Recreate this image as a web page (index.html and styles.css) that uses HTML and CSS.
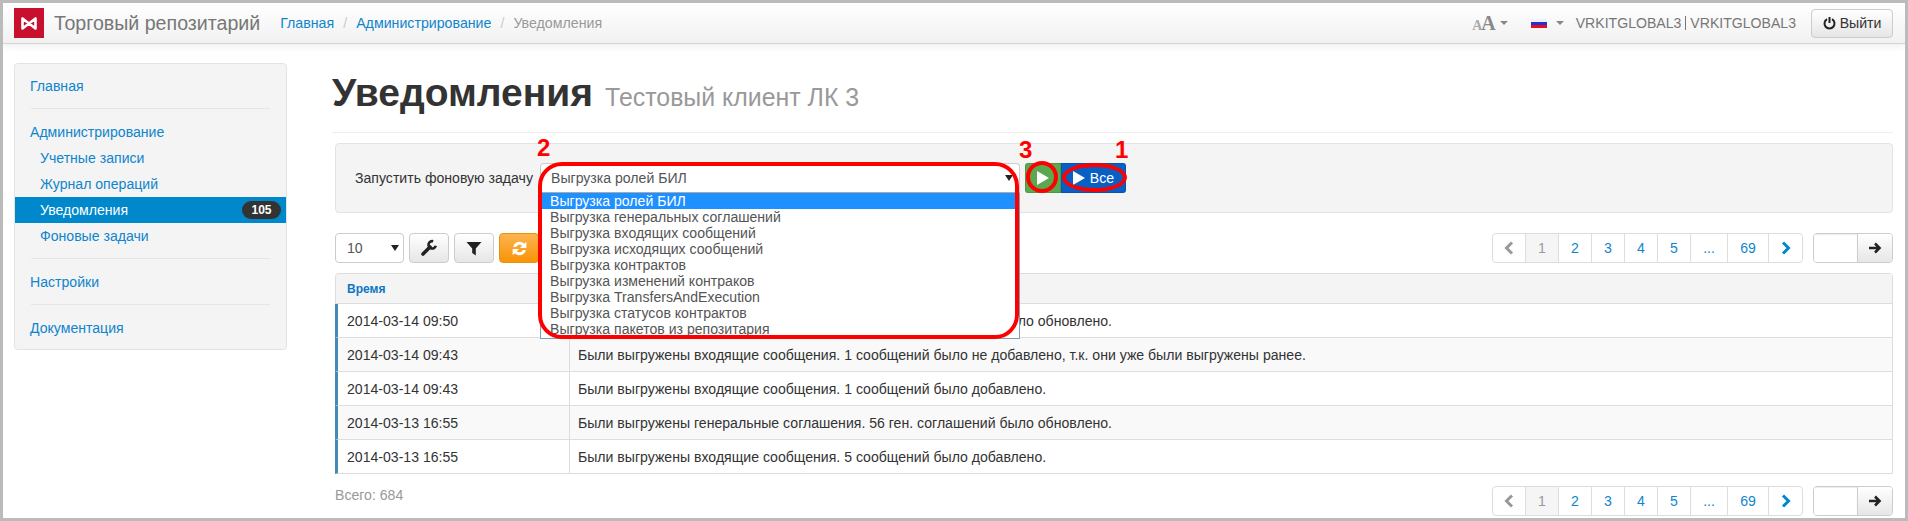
FILE: index.html
```html
<!DOCTYPE html>
<html lang="ru">
<head>
<meta charset="utf-8">
<title>Уведомления</title>
<link rel="stylesheet" href="styles.css">
</head>
<body>
<div class="frame">
  <header class="navbar">
    <div class="logo"><svg width="30" height="30" viewBox="0 0 30 30"><path d="M8.5 10.5V20.5L21.5 10.5V20.5L8.5 10.5Z" fill="none" stroke="#fff" stroke-width="2.6" stroke-linejoin="round"/></svg></div>
    <div class="brand">Торговый репозитарий</div>
    <nav class="crumbs"><a>Главная</a><span class="sep">/</span><a>Администрирование</a><span class="sep">/</span><span class="cur">Уведомления</span></nav>
    <div class="nav-right">
      <div class="aa"><span class="a1">A</span><span class="a2">A</span></div><i class="caret"></i>
      <svg class="flag" width="16" height="9" viewBox="0 0 16 9"><rect width="16" height="3" fill="#eef"/><rect y="3" width="16" height="3" fill="#2233cc"/><rect y="6" width="16" height="3" fill="#e01020"/></svg><i class="caret caret-flag"></i>
      <span class="user">VRKITGLOBAL3</span><span class="user-sep"></span><span class="user">VRKITGLOBAL3</span>
      <button class="logout"><svg width="13" height="14" viewBox="0 0 13 14"><path d="M4 3.2A5 5 0 1 0 9 3.2" fill="none" stroke="#222" stroke-width="2"/><path d="M6.5 1V7" stroke="#222" stroke-width="2"/></svg>Выйти</button>
    </div>
  </header>
  <div class="layout">
    <aside class="sidebar">
      <a class="item">Главная</a>
      <div class="divider"></div>
      <a class="item">Администрирование</a>
      <a class="item sub">Учетные записи</a>
      <a class="item sub">Журнал операций</a>
      <a class="item sub active">Уведомления<span class="badge">105</span></a>
      <a class="item sub">Фоновые задачи</a>
      <div class="divider"></div>
      <a class="item">Настройки</a>
      <div class="divider"></div>
      <a class="item">Документация</a>
    </aside>
    <main class="main">
      <div class="page-header"><h1>Уведомления</h1><small>Тестовый клиент ЛК 3</small></div>
      <div class="content">
        <div class="well">
          <span class="well-label">Запустить фоновую задачу</span>
          <div class="combo">
            <div class="combo-value">Выгрузка ролей БИЛ<i class="arrow"></i></div>
            <ul class="combo-list">
              <li class="sel">Выгрузка ролей БИЛ</li>
              <li>Выгрузка генеральных соглашений</li>
              <li>Выгрузка входящих сообщений</li>
              <li>Выгрузка исходящих сообщений</li>
              <li>Выгрузка контрактов</li>
              <li>Выгрузка изменений контраков</li>
              <li>Выгрузка TransfersAndExecution</li>
              <li>Выгрузка статусов контрактов</li>
              <li>Выгрузка пакетов из репозитария</li>
            </ul>
          </div>
          <button class="run run-green"><svg width="14" height="16" viewBox="0 0 14 16"><path d="M1 1L13 8L1 15Z" fill="#fff"/></svg></button>
          <button class="run run-blue"><svg width="12" height="14" viewBox="0 0 12 14"><path d="M0 0L12 7L0 14Z" fill="#fff"/></svg>Все</button>
        </div>
        <div class="toolbar">
          <div class="size">10<i class="arrow"></i></div>
          <button class="tool"><svg width="18" height="18" viewBox="0 0 18 18"><path d="M3 15L10 8" fill="none" stroke="#222" stroke-width="3.6" stroke-linecap="round"/><path d="M13.16 2.23A3.7 3.7 0 1 0 15.77 6.76" fill="none" stroke="#222" stroke-width="2.6"/></svg></button>
          <button class="tool"><svg width="16" height="15" viewBox="0 0 16 15"><path d="M0.5 1H15.5L9.8 7.5V14.500L6.200 12V7.500Z" fill="#222"/></svg></button>
          <button class="tool tool-orange"><svg width="19" height="19" viewBox="0 0 18 18"><path d="M3 7.500A6.200 6.200 0 0 1 13.500 4.500L15.500 2.500V8.500H9.500L11.500 6.500A3.500 3.500 0 0 0 5.800 7.500Z" fill="#fff"/><path d="M15 10.500A6.200 6.200 0 0 1 4.500 13.500L2.500 15.500V9.500H8.500L6.500 11.500A3.500 3.500 0 0 0 12.200 10.500Z" fill="#fff"/></svg></button>
          <div class="pager">
            <a class="pg muted"><svg width="10" height="14" viewBox="0 0 10 14"><path d="M8 1.500L2.500 7L8 12.500" fill="none" stroke="#999" stroke-width="3"/></svg></a><a class="pg current">1</a><a class="pg">2</a><a class="pg">3</a><a class="pg">4</a><a class="pg">5</a><a class="pg pg-more">...</a><a class="pg pg-last">69</a><a class="pg pg-next"><svg width="10" height="14" viewBox="0 0 10 14"><path d="M2 1.500L7.500 7L2 12.500" fill="none" stroke="#08c" stroke-width="3"/></svg></a>
          </div>
          <div class="go"><span class="go-input"></span><span class="go-btn"><svg width="14" height="14" viewBox="0 0 14 14"><path d="M1 7H11M7 2.500L11.500 7L7 11.500" fill="none" stroke="#222" stroke-width="2.600"/></svg></span></div>
        </div>
        <table class="grid">
          <thead><tr><th class="c-time">Время</th><th></th></tr></thead>
          <tbody>
            <tr><td>2014-03-14 09:50</td><td>Были выгружены генеральные соглашения. 56 ген. соглашений было обновлено.</td></tr>
            <tr class="odd"><td>2014-03-14 09:43</td><td>Были выгружены входящие сообщения. 1 сообщений было не добавлено, т.к. они уже были выгружены ранее.</td></tr>
            <tr><td>2014-03-14 09:43</td><td>Были выгружены входящие сообщения. 1 сообщений было добавлено.</td></tr>
            <tr class="odd"><td>2014-03-13 16:55</td><td>Были выгружены генеральные соглашения. 56 ген. соглашений было обновлено.</td></tr>
            <tr><td>2014-03-13 16:55</td><td>Были выгружены входящие сообщения. 5 сообщений было добавлено.</td></tr>
          </tbody>
        </table>
        <div class="footer">
          <span class="total">Всего: 684</span>
          <div class="pager">
            <a class="pg muted"><svg width="10" height="14" viewBox="0 0 10 14"><path d="M8 1.500L2.500 7L8 12.500" fill="none" stroke="#999" stroke-width="3"/></svg></a><a class="pg current">1</a><a class="pg">2</a><a class="pg">3</a><a class="pg">4</a><a class="pg">5</a><a class="pg pg-more">...</a><a class="pg pg-last">69</a><a class="pg pg-next"><svg width="10" height="14" viewBox="0 0 10 14"><path d="M2 1.500L7.500 7L2 12.500" fill="none" stroke="#08c" stroke-width="3"/></svg></a>
          </div>
          <div class="go"><span class="go-input"></span><span class="go-btn"><svg width="14" height="14" viewBox="0 0 14 14"><path d="M1 7H11M7 2.500L11.500 7L7 11.500" fill="none" stroke="#222" stroke-width="2.600"/></svg></span></div>
        </div>
      </div>
    </main>
  </div>
  <span class="num num-2">2</span>
  <span class="num num-3">3</span>
  <span class="num num-1">1</span>
  <div class="mark mark-list"></div>
  <div class="mark mark-green"></div>
  <div class="mark mark-blue"></div>
</div>
</body>
</html>
```

FILE: styles.css
```css
* { box-sizing: border-box; }
html, body { margin: 0; padding: 0; background: #fff; }
body { font-family: "Liberation Sans", Arial, sans-serif; font-size: 14.08px; color: #333; }
a { color: #0f85cc; text-decoration: none; }
.frame { position: relative; width: 1908px; height: 521px; border: 3px solid #bbb; overflow: hidden; background: #fff; }

.navbar { display: flex; align-items: center; height: 41px; padding: 0 12px 0 11px; background: linear-gradient(#fff, #f1f1f1); border-bottom: 1px solid #d4d4d4; box-shadow: 0 2px 8px rgba(0,0,0,.07); }
.logo { width: 30px; height: 30px; background: #c8102e; flex: none; }
.brand { margin-left: 10px; font-size: 19.6px; color: #777; white-space: nowrap; }
.crumbs { margin-left: 20px; display: flex; align-items: center; font-size: 14.2px; }
.sep { margin: 0 9px; color: #ccc; }
.cur { color: #999; }
.nav-right { margin-left: auto; display: flex; align-items: center; }
.aa { font-family: "Liberation Serif", serif; font-weight: bold; display: flex; align-items: baseline; }
.a1 { font-size: 14px; margin-right: -1px; color: #aaa; }
.a2 { font-size: 20px; color: #888; }
.caret { display: block; width: 0; height: 0; margin-left: 4px; border: 4px solid transparent; border-top-color: #888; border-bottom: 0; }
.flag { margin-left: 23px; }
.caret-flag { margin-left: 9px; margin-right: 12px; }
.user { color: #777; white-space: nowrap; }
.user-sep { width: 1px; height: 14px; background: #777; margin: 0 4px; }
.logout { margin-left: 15px; width: 82px; height: 29px; padding: 0; display: flex; align-items: center; justify-content: center; gap: 4px; font: inherit; color: #333; background: linear-gradient(#fff, #e6e6e6); border: 1px solid #ccc; border-radius: 4px; }

.layout { display: flex; padding: 19px 12px 0 11px; }
.sidebar { flex: none; width: 273px; height: 287px; padding: 9px 0; background: #f4f4f4; border: 1px solid #e3e3e3; border-radius: 4px; }
.item { display: flex; align-items: center; justify-content: space-between; height: 26px; padding: 0 5px 0 15px; }
.sub { padding-left: 25px; }
.active { background: #0088cc; color: #fff; }
.badge { display: block; width: 39px; height: 18px; line-height: 18px; text-align: center; font-size: 12px; font-weight: bold; color: #fff; background: #333; border-radius: 9px; }
.divider { height: 1px; margin: 9px 16px 10px; background: #e5e5e5; }

.main { flex: none; width: 1561px; margin-left: 45px; }
.page-header { display: flex; align-items: baseline; gap: 12px; height: 70px; padding-top: 7px; border-bottom: 1px solid #eee; white-space: nowrap; }
h1 { margin: 0; font-size: 39px; line-height: 46px; font-weight: bold; color: #333; }
small { font-size: 24.9px; color: #999; }
.content { margin-left: 3px; }

.well { display: flex; align-items: center; height: 70px; margin-top: 10px; padding: 0 0 0 19px; background: #f4f4f4; border: 1px solid #e3e3e3; border-radius: 4px; }
.well-label { width: 185px; flex: none; white-space: nowrap; }
.combo { position: relative; width: 480px; flex: none; }
.combo-value { display: flex; align-items: center; justify-content: space-between; height: 30px; padding: 0 6px 0 10px; color: #555; background: #fff; border: 1px solid #ccc; border-bottom-color: #aaa; border-radius: 4px 4px 0 0; }
.arrow { display: block; width: 0; height: 0; border: 4px solid transparent; border-top: 6px solid #222; border-bottom: 0; }
.combo-list { position: absolute; z-index: 5; left: 0; top: 30px; width: 100%; height: 146px; margin: 0; padding: 0; list-style: none; overflow: hidden; color: #555; background: #fff; border: 1px solid #7f9db9; border-top: 0; }
.combo-list li { height: 16px; line-height: 16px; padding-left: 9px; white-space: nowrap; }
.combo-list .sel { background: #1e90ff; color: #fff; }
.run { display: flex; align-items: center; justify-content: center; height: 30px; padding: 0; border: 1px solid rgba(0,0,0,.1); color: #fff; font: inherit; }
.run-green { width: 36px; margin-left: 5px; background: #5aa84f; border-radius: 3px 0 0 3px; }
.run-blue { width: 65px; gap: 5px; background: #0a5fc4; border-radius: 0 3px 3px 0; }

.toolbar { display: flex; align-items: center; height: 30px; margin-top: 20px; }
.size { display: flex; align-items: center; justify-content: space-between; width: 69px; height: 30px; padding: 0 4px 0 11px; color: #555; background: #fff; border: 1px solid #ccc; border-radius: 4px; }
.tool { display: flex; align-items: center; justify-content: center; width: 40px; height: 30px; margin-left: 5px; padding: 0; background: linear-gradient(#fff, #e6e6e6); border: 1px solid #ccc; border-radius: 4px; }
.tool-orange { background: linear-gradient(#fbb450, #f89406); border-color: #e8900f; }
.pager { display: flex; height: 30px; margin-left: auto; background: #fff; border: 1px solid #ddd; border-radius: 4px; overflow: hidden; }
.pg { display: flex; align-items: center; justify-content: center; width: 33px; border-left: 1px solid #ddd; }
.pg:first-child { border-left: 0; width: 32px; }
.pg.muted { color: #999; }
.pg.current { color: #999; background: #f5f5f5; }
.pg-more { width: 37px; }
.pg-last { width: 41px; }
.pg-next { width: 34px; }
.go { display: flex; width: 80px; height: 30px; margin-left: 10px; border: 1px solid #ccc; border-radius: 4px; overflow: hidden; flex: none; }
.go-input { width: 43px; background: #fff; box-shadow: inset 0 1px 1px rgba(0,0,0,.08); }
.go-btn { display: flex; align-items: center; justify-content: center; flex: 1; background: linear-gradient(#fff, #e6e6e6); border-left: 1px solid #ccc; }

.grid { width: 100%; table-layout: fixed; margin-top: 10px; border-collapse: separate; border-spacing: 0; border: 1px solid #ddd; border-width: 1px 1px 0 0; border-radius: 4px 4px 0 0; }
.grid th { height: 30px; background: #f4f4f4; border-bottom: 1px solid #ddd; border-left: 1px solid #ddd; text-align: left; padding: 0 0 0 11px; font-size: 12px; color: #0f75c4; }
.grid th + th { border-left: 0; }
.c-time { width: 234px; border-top-left-radius: 4px; }
.grid td { height: 34px; padding: 0 0 0 10px; border-bottom: 1px solid #ddd; white-space: nowrap; overflow: hidden; }
.grid td:first-child { border-left: 3px solid #428bb5; padding-left: 9px; }
.grid td + td { border-left: 1px solid #ddd; padding-left: 8px; }
.odd td { background: #f9f9f9; }

.footer { display: flex; align-items: flex-start; margin-top: 12px; }
.total { color: #999; margin-top: 1px; }

.num { position: absolute; z-index: 7; font-size: 24px; line-height: 24px; font-weight: bold; color: #f00; }
.num-2 { left: 534px; top: 133px; }
.num-3 { left: 1016px; top: 135px; }
.num-1 { left: 1112px; top: 135px; }
.mark { position: absolute; z-index: 6; border: 4px solid #f00; }
.mark-list { left: 535px; top: 159px; width: 481px; height: 177px; border-radius: 24px; }
.mark-green { left: 1023px; top: 158px; width: 32px; height: 32px; border-radius: 50%; }
.mark-blue { left: 1059px; top: 160px; width: 65px; height: 29px; border-radius: 50%; }
```
